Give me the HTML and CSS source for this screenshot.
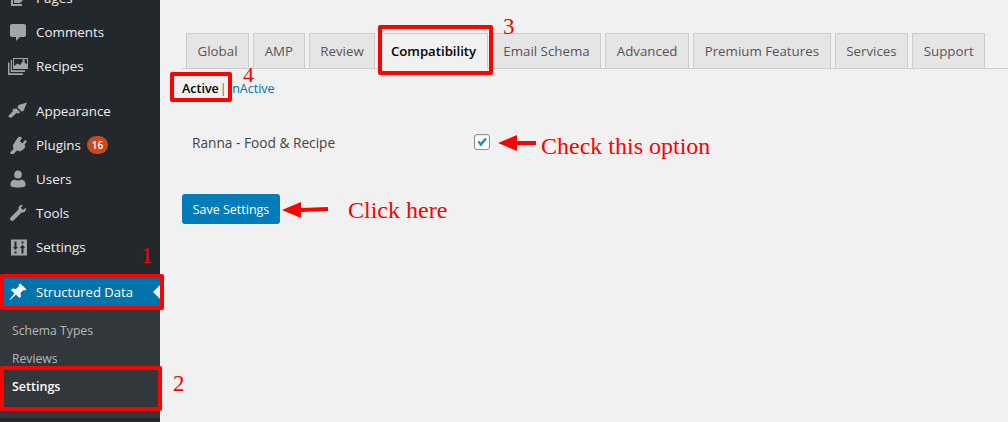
FILE: index.html
```html
<!DOCTYPE html>
<html lang="en">
<head>
    <meta charset="UTF-8">
    <meta name="viewport" content="width=device-width, initial-scale=1.0">
    <title>Structured Data Settings</title>
    <link rel="stylesheet" href="styles.css">
</head>
<body>

    <div class="page">

        <!-- Admin menu -->
        <aside class="sidebar">
            <ul class="menu">
                <li class="menu-item">
                    <svg class="menu-icon" viewBox="0 0 20 20"><path d="M6 15V2h10v9l-4 4H6zM3 18V5h2v11h9v2H3z"/></svg>
                    <span>Pages</span>
                </li>
                <li class="menu-item">
                    <svg class="menu-icon" viewBox="0 0 20 20"><path d="M4 2h12a2 2 0 0 1 2 2v9a2 2 0 0 1-2 2h-4l-4 4v-4H4a2 2 0 0 1-2-2V4a2 2 0 0 1 2-2z"/></svg>
                    <span>Comments</span>
                </li>
                <li class="menu-item">
                    <svg class="menu-icon" viewBox="0 0 20 20"><path fill-rule="evenodd" d="M5 2h15v11H5V2zm1 1v7l3.500-2.500L12 9l3-4 4 3.500V3H6zm11 1.500a1.300 1.300 0 1 1-2.600 0 1.300 1.300 0 0 1 2.600 0zM2.800 4H4v10.200h13V16H2.800V4zM0 6.500h1.500v10.800H15V19H0V6.500z"/></svg>
                    <span>Recipes</span>
                </li>
                <li class="menu-sep"></li>
                <li class="menu-item">
                    <svg class="menu-icon" viewBox="0 0 20 20"><path d="M10.500 4l8.500-2.500L15.500 10l-2 .5L9.500 6.500zM8.500 7.500l3.500 3.500-1 1.500-2.500-.5-5.500 5L0 15.500l5-5.500-.5-2z"/></svg>
                    <span>Appearance</span>
                </li>
                <li class="menu-item">
                    <svg class="menu-icon" viewBox="0 0 20 20"><path d="M11.500 1.500l2.500 1-2.200 4 2.700 1.700 2.500-3.200 2 1.300-2.700 3.700 1.200 1-1.500 3-4 2.500-3-1-3.500 3.500H3l-1-1.500 3.500-3.500-.8-3.500L9.500 3z"/></svg>
                    <span>Plugins</span>
                    <span class="badge">16</span>
                </li>
                <li class="menu-item">
                    <svg class="menu-icon" viewBox="0 0 20 20"><path d="M10 1.500a3.800 3.800 0 0 1 3.800 4.300 3.800 3.800 0 0 1-7.600 0A3.800 3.800 0 0 1 10 1.500zM6.500 10.500c2 1.300 5 1.300 7 0 2.300.5 4 2 4 4.300V17c-3 2-12 2-15 0v-2.200c0-2.300 1.700-3.800 4-4.300z"/></svg>
                    <span>Users</span>
                </li>
                <li class="menu-item">
                    <svg class="menu-icon" viewBox="0 0 20 20"><path d="M14 2c-2.500 0-4 2-3.500 4.500L3 14c-1.300 1.300-1 2.500-.3 3.300.8.700 2 1 3.300-.3l7.500-7.500c2.500.5 4.500-1 4.500-3.500l-.3-1.300-2.700 2.300-2.300-2.300 2.300-2.400z"/></svg>
                    <span>Tools</span>
                </li>
                <li class="menu-item">
                    <svg class="menu-icon" viewBox="0 0 20 20"><path fill-rule="evenodd" d="M3 2.500h16v16H3v-16zm3.500 2v5.500H5l2.500 3 2.500-3H8.500V4.500h-2zm0 10v2h2v-2h-2zm7-10v2h2v-2h-2zm1 3L12 11h1.500v5.500h2V11H17l-2.500-3.500z"/></svg>
                    <span>Settings</span>
                </li>
                <li class="menu-sep"></li>
                <li class="menu-item menu-current">
                    <svg class="menu-icon" viewBox="0 0 20 20"><path d="M12.500 1.500l6 6-1.500 1-1.500-.5-3 3 .5 3.500-1.500 1.500-3.500-3.500L2 18l-.5-.5 5-6L3 8l1.500-1.500 3.500.5 3-3-.5-1.500z"/></svg>
                    <span>Structured Data</span>
                </li>
            </ul>
            <ul class="submenu">
                <li>Schema Types</li>
                <li>Reviews</li>
                <li class="submenu-current">Settings</li>
            </ul>
        </aside>

        <!-- Plugin settings -->
        <main class="content">
            <nav class="tabs">
                <a class="tab">Global</a>
                <a class="tab">AMP</a>
                <a class="tab">Review</a>
                <a class="tab tab-active">Compatibility</a>
                <a class="tab">Email Schema</a>
                <a class="tab">Advanced</a>
                <a class="tab">Premium Features</a>
                <a class="tab">Services</a>
                <a class="tab">Support</a>
            </nav>

            <div class="subsubsub">
                <strong>Active</strong>
                <span class="sep">|</span>
                <a href="#">InActive</a>
            </div>

            <div class="option-row">
                <span class="option-name">Ranna - Food &amp; Recipe</span>
                <span class="checkbox">
                    <svg viewBox="0 0 16 16"><path d="M3 8.200l1.700-1.700 2 2L11.500 3 13.500 4.500 6.800 13z"/></svg>
                </span>
            </div>

            <button class="btn-save">Save Settings</button>
        </main>

        <!-- Tutorial annotations drawn over the screenshot -->
        <div class="mark mark-menu"></div>
        <div class="mark mark-sub"></div>
        <div class="mark mark-tab"></div>
        <div class="mark mark-active"></div>

        <span class="note num-1">1</span>
        <span class="note num-2">2</span>
        <span class="note num-3">3</span>
        <span class="note num-4">4</span>
        <span class="note note-check">Check this option</span>
        <span class="note note-click">Click here</span>

        <svg class="arrow arrow-check" viewBox="0 0 38 18"><path d="M0 9L19 1v6h19v4H19v6z"/></svg>
        <svg class="arrow arrow-click" viewBox="0 0 46 18"><path d="M0 9l19-8v6l27-1v4l-27 1v6z"/></svg>
    </div>

</body>
</html>
```

FILE: styles.css
```css
* {
    margin: 0;
    padding: 0;
    box-sizing: border-box;
}

html, body {
    height: 422px;
    overflow: hidden;
}

body {
    font-family: 'Open Sans', sans-serif;
    font-size: 13px;
    color: #444;
    background-color: #f1f1f1;
}

ul {
    list-style: none;
}

.page {
    position: relative;
    display: flex;
    height: 422px;
}

/* Admin menu */
.sidebar {
    width: 160px;
    flex-shrink: 0;
    background-color: #23282d;
    overflow: hidden;
}

.menu {
    margin-top: -19px;
}

.menu-item {
    display: flex;
    align-items: center;
    height: 34px;
    padding-left: 8px;
    color: #eee;
    font-size: 13.400px;
}

.menu-icon {
    width: 20px;
    height: 20px;
    margin-right: 8px;
    fill: #a0a5aa;
    flex-shrink: 0;
}

.menu-sep {
    height: 11px;
}

.menu-current {
    background-color: #0073aa;
    color: #fff;
    position: relative;
    font-size: 13.100px;
}

.menu-current .menu-icon {
    fill: #fff;
}

.menu-current::after {
    content: '';
    position: absolute;
    right: 0;
    top: 10px;
    border: 7px solid transparent;
    border-left-width: 0;
    border-right-color: #f1f1f1;
}

.badge {
    display: inline-block;
    margin-left: 6px;
    width: 21px;
    height: 18px;
    border-radius: 9px;
    background-color: #ca4a1f;
    color: #fff;
    font-size: 10px;
    font-weight: 600;
    line-height: 18px;
    text-align: center;
}

.submenu {
    background-color: #32373c;
    height: 109px;
    padding-top: 8px;
}

.submenu li {
    height: 28px;
    line-height: 28px;
    padding-left: 12px;
    color: #b4b9be;
    font-size: 12.200px;
}

.submenu .submenu-current {
    color: #fff;
    font-weight: 600;
    font-size: 12.500px;
}

/* Plugin settings */
.content {
    flex: 1;
    min-width: 0;
    padding: 33px 0 0 22px;
}

.tabs {
    display: flex;
    gap: 4px;
    height: 36px;
    padding-left: 4px;
    border-bottom: 1px solid #ccc;
}

.tab {
    height: 36px;
    padding: 0 10.600px;
    border: 1px solid #ccc;
    background-color: #e5e5e5;
    color: #555;
    font-size: 13.300px;
    font-weight: 500;
    line-height: 34px;
}

.tab-active {
    background-color: #f1f1f1;
    border-bottom-color: #f1f1f1;
    color: #000;
    font-size: 13.200px;
    font-weight: 600;
}

.subsubsub {
    display: flex;
    gap: 1px;
    margin-top: 11px;
    font-size: 12.500px;
    line-height: 18px;
    color: #666;
}

.subsubsub strong {
    color: #000;
    font-weight: 600;
}

.subsubsub .sep {
    margin-right: 1px;
}

.subsubsub a {
    color: #0073aa;
    text-decoration: none;
}

.option-row {
    display: flex;
    align-items: center;
    margin-top: 34px;
    padding-left: 10px;
    height: 20px;
}

.option-name {
    width: 282px;
    font-size: 13.700px;
}

.checkbox {
    width: 16px;
    height: 16px;
    border: 1px solid #8c8f94;
    border-radius: 3px;
    background-color: #fff;
    box-shadow: inset 0 1px 2px rgba(0, 0, 0, 0.1);
}

.checkbox svg {
    display: block;
    width: 14px;
    height: 14px;
    fill: #1e8cbe;
}

.btn-save {
    display: block;
    margin-top: 42px;
    width: 98px;
    height: 30px;
    border: 0;
    border-radius: 3px;
    background-color: #007cb8;
    color: #fff;
    font-family: inherit;
    font-size: 12.500px;
}

/* Annotations */
.mark {
    position: absolute;
    border: 4px solid #f00;
    border-radius: 2px;
}

.mark-menu {
    left: 0;
    top: 274px;
    width: 164px;
    height: 36px;
}

.mark-sub {
    left: 0;
    top: 366px;
    width: 162px;
    height: 45px;
}

.mark-tab {
    left: 378px;
    top: 25px;
    width: 115px;
    height: 50px;
}

.mark-active {
    left: 170px;
    top: 72px;
    width: 62px;
    height: 30px;
}

.note {
    position: absolute;
    font-family: 'Liberation Serif', serif;
    color: #f00;
    line-height: 1;
    white-space: nowrap;
}

.num-1 {
    left: 141px;
    top: 244px;
    font-size: 23px;
}

.num-2 {
    left: 173px;
    top: 372px;
    font-size: 23px;
}

.num-3 {
    left: 503px;
    top: 15px;
    font-size: 23px;
}

.num-4 {
    left: 243px;
    top: 64px;
    font-size: 22px;
}

.note-check {
    left: 541px;
    top: 134px;
    font-size: 24px;
}

.note-click {
    left: 348px;
    top: 198px;
    font-size: 24px;
}

.arrow {
    position: absolute;
    fill: #f00;
}

.arrow-check {
    left: 498px;
    top: 134px;
    width: 38px;
    height: 18px;
}

.arrow-click {
    left: 282px;
    top: 201px;
    width: 46px;
    height: 18px;
}
```
